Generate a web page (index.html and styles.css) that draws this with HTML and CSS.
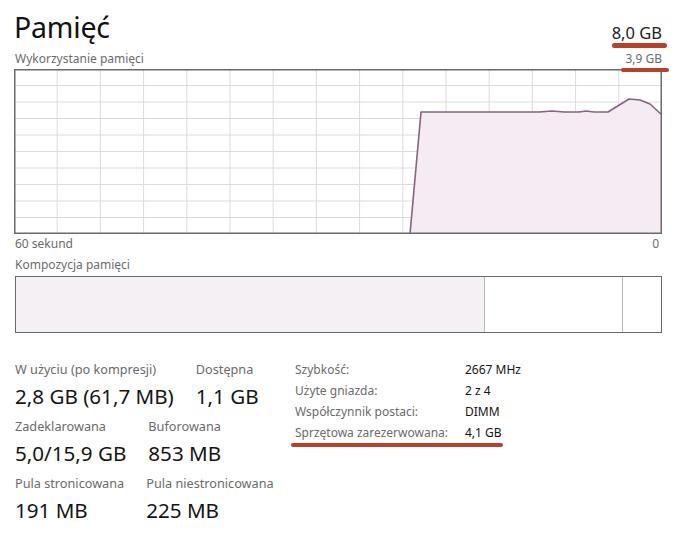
FILE: index.html
```html
<!DOCTYPE html>
<html lang="pl">
<head>
<meta charset="utf-8">
<link rel="stylesheet" href="styles.css">
</head>
<body>
<div class="page">
  <div class="head">
    <h1 class="title">Pamięć</h1>
    <span class="total mark">8,0 GB</span>
  </div>
  <div class="subhead">
    <span class="label">Wykorzystanie pamięci</span>
    <span class="label mark mark-thin">3,9 GB</span>
  </div>
  <svg class="chart" width="648" height="165" viewBox="0 0 648 165">
    <g class="grid">
      <line x1="43.2" y1="0" x2="43.2" y2="165"/>
      <line x1="86.4" y1="0" x2="86.4" y2="165"/>
      <line x1="129.6" y1="0" x2="129.6" y2="165"/>
      <line x1="172.8" y1="0" x2="172.8" y2="165"/>
      <line x1="216" y1="0" x2="216" y2="165"/>
      <line x1="259.2" y1="0" x2="259.2" y2="165"/>
      <line x1="302.4" y1="0" x2="302.4" y2="165"/>
      <line x1="345.6" y1="0" x2="345.6" y2="165"/>
      <line x1="388.8" y1="0" x2="388.8" y2="165"/>
      <line x1="432" y1="0" x2="432" y2="165"/>
      <line x1="475.2" y1="0" x2="475.2" y2="165"/>
      <line x1="518.4" y1="0" x2="518.4" y2="165"/>
      <line x1="561.6" y1="0" x2="561.6" y2="165"/>
      <line x1="604.8" y1="0" x2="604.8" y2="165"/>
      <line x1="0" y1="16.5" x2="648" y2="16.5"/>
      <line x1="0" y1="33" x2="648" y2="33"/>
      <line x1="0" y1="49.5" x2="648" y2="49.5"/>
      <line x1="0" y1="66" x2="648" y2="66"/>
      <line x1="0" y1="82.5" x2="648" y2="82.5"/>
      <line x1="0" y1="99" x2="648" y2="99"/>
      <line x1="0" y1="115.5" x2="648" y2="115.5"/>
      <line x1="0" y1="132" x2="648" y2="132"/>
      <line x1="0" y1="148.5" x2="648" y2="148.5"/>
    </g>
    <polygon class="area" points="396,165 407,43 525,43 538,42 550,43 565,43 572,42 580,43 594,43 615,30 626,31 636,35 648,46 648,165"/>
    <polyline class="line" points="396,165 407,43 525,43 538,42 550,43 565,43 572,42 580,43 594,43 615,30 626,31 636,35 648,46"/>
    <rect class="frame" x="0.75" y="0.75" width="646.5" height="163.5"/>
  </svg>
  <div class="axis">
    <span class="label">60 sekund</span>
    <span class="label">0</span>
  </div>
  <div class="label comp-title">Kompozycja pamięci</div>
  <div class="comp">
    <div class="seg seg-used"></div>
    <div class="seg seg-free"></div>
    <div class="seg seg-rest"></div>
  </div>
  <div class="stats">
    <div class="left">
      <div class="row">
        <div class="stat"><div class="label">W użyciu (po kompresji)</div><div class="value">2,8 GB (61,7 MB)</div></div>
        <div class="stat"><div class="label">Dostępna</div><div class="value">1,1 GB</div></div>
      </div>
      <div class="row">
        <div class="stat"><div class="label">Zadeklarowana</div><div class="value">5,0/15,9 GB</div></div>
        <div class="stat"><div class="label">Buforowana</div><div class="value">853 MB</div></div>
      </div>
      <div class="row">
        <div class="stat"><div class="label">Pula stronicowana</div><div class="value">191 MB</div></div>
        <div class="stat"><div class="label">Pula niestronicowana</div><div class="value">225 MB</div></div>
      </div>
    </div>
    <div class="right">
      <div class="props">
        <span class="plabel">Szybkość:</span><span class="pvalue">2667 MHz</span>
        <span class="plabel">Użyte gniazda:</span><span class="pvalue">2 z 4</span>
        <span class="plabel">Współczynnik postaci:</span><span class="pvalue">DIMM</span>
        <span class="plabel">Sprzętowa zarezerwowana:</span><span class="pvalue">4,1 GB</span>
      </div>
      <div class="redline"></div>
    </div>
  </div>
</div>
</body>
</html>
```
FILE: styles.css
```css
* { box-sizing: border-box; }
html, body { margin: 0; background: #ffffff; }
body {
  font-family: "Noto Sans", "Open Sans", sans-serif;
  color: #1b1b1b;
  width: 679px;
  height: 543px;
  overflow: hidden;
}
.page {
  padding: 5px 17px 0 14px;
}
.head {
  display: flex;
  justify-content: space-between;
  align-items: flex-end;
  height: 42px;
}
.title {
  margin: 0;
  font-weight: 400;
  font-size: 28.5px;
  line-height: 40px;
  letter-spacing: -0.2px;
  color: #111;
}
.total {
  font-size: 16.5px;
  line-height: 20px;
  color: #222;
  margin-bottom: 4px;
}
.mark { position: relative; }
.mark::after {
  content: "";
  position: absolute;
  left: 0;
  right: -5px;
  bottom: -5px;
  height: 5px;
  border-radius: 2.5px;
  background: #b8412c;
}
.mark-thin::after { left: -4px; right: -7px; bottom: -3px; height: 4px; }
.label {
  font-size: 12px;
  line-height: 15px;
  color: #6b6b6b;
}
.subhead {
  display: flex;
  justify-content: space-between;
  padding-left: 1px;
  height: 22px;
  padding-top: 4px;
}
.chart { display: block; }
.grid line { stroke: #e0d9de; stroke-width: 1; }
.area { fill: #f5ebf2; }
.line { fill: none; stroke: #86637f; stroke-width: 1.6; stroke-linejoin: round; }
.frame { fill: none; stroke: #6a6a6a; stroke-width: 1.5; }
.axis {
  display: flex;
  justify-content: space-between;
  padding: 2px 3px 0 1px;
  height: 23px;
}
.comp-title {
  padding-left: 1px;
  height: 19px;
}
.comp {
  margin-left: 1px;
  display: flex;
  height: 57px;
  border: 1.5px solid #6a6a6a;
}
.seg-used { width: 469px; background: #f5f0f4; border-right: 1px solid #b8b8b8; }
.seg-free { width: 138px; background: #fff; border-right: 1px solid #b8b8b8; }
.seg-rest { flex: 1; background: #fff; }
.stats {
  display: flex;
  padding-top: 28px;
  padding-left: 1px;
}
.left {
  width: 280px;
  display: flex;
  flex-direction: column;
  gap: 8px;
}
.row {
  display: flex;
  gap: 22px;
}
.stat .label {
  font-size: 12.7px;
  line-height: 17px;
}
.value {
  font-size: 20.6px;
  line-height: 28px;
  margin-top: 4px;
  color: #141414;
}
.right {
  display: flex;
  flex-direction: column;
  padding-top: 1px;
}
.props {
  display: grid;
  grid-template-columns: 170px auto;
  grid-auto-rows: 21px;
  font-size: 12px;
  line-height: 16px;
}
.plabel { color: #6b6b6b; }
.pvalue { color: #141414; }
.redline {
  margin-top: -3px;
  margin-left: -4px;
  width: 212px;
  height: 4px;
  border-radius: 2px;
  background: #b8412c;
}
```
